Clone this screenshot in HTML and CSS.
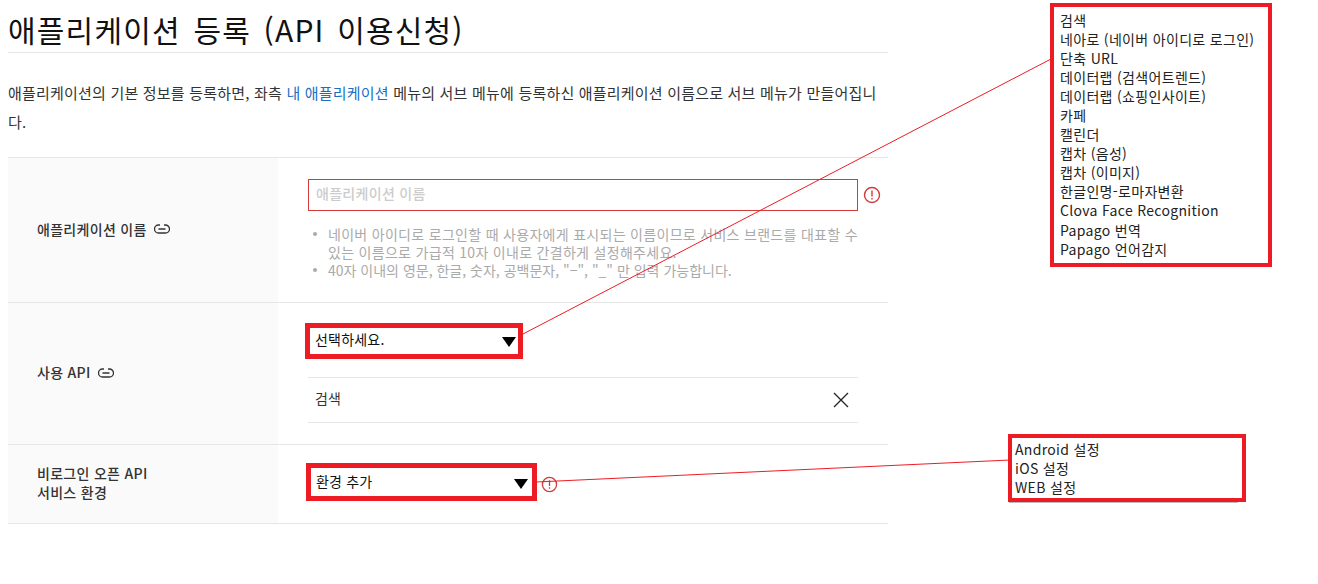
FILE: index.html
```html
<!DOCTYPE html>
<html lang="ko">
<head>
    <meta charset="UTF-8">
    <title>애플리케이션 등록 (API 이용신청)</title>
    <link rel="stylesheet" href="styles.css">
</head>
<body>
    <div class="content">
        <h1>애플리케이션 등록 (API 이용신청)</h1>
        <p class="intro">애플리케이션의 기본 정보를 등록하면, 좌측 <a href="#">내 애플리케이션</a> 메뉴의 서브 메뉴에 등록하신 애플리케이션 이름으로 서브 메뉴가 만들어집니다.</p>

        <div class="form-row row-name">
            <div class="form-label">
                <span>애플리케이션 이름</span>
                <svg class="link-icon" viewBox="0 0 16 10"><path d="M6 1H4.5a4 4 0 0 0 0 8H11.5a4 4 0 0 0 0-8H10M4.5 5h7" /></svg>
            </div>
            <div class="form-field">
                <div class="input-line">
                    <div class="text-input">애플리케이션 이름</div>
                    <svg class="alert-icon" viewBox="0 0 18 18"><circle cx="9" cy="9" r="7.5" /><path d="M9 4.5v6M9 12v1.5" /></svg>
                </div>
                <ul class="hints">
                    <li>네이버 아이디로 로그인할 때 사용자에게 표시되는 이름이므로 서비스 브랜드를 대표할 수 있는 이름으로 가급적 10자 이내로 간결하게 설정해주세요.</li>
                    <li class="hint-short">40자 이내의 영문, 한글, 숫자, 공백문자, "−", "_" 만 입력 가능합니다.</li>
                </ul>
            </div>
        </div>

        <div class="form-row row-api">
            <div class="form-label">
                <span>사용 API</span>
                <svg class="link-icon" viewBox="0 0 16 10"><path d="M6 1H4.5a4 4 0 0 0 0 8H11.5a4 4 0 0 0 0-8H10M4.5 5h7" /></svg>
            </div>
            <div class="form-field">
                <div class="select-box select-api">선택하세요.<i class="arrow"></i></div>
                <div class="api-item">
                    <span>검색</span>
                    <svg class="close-icon" viewBox="0 0 16 16"><path d="M1 1l14 14M15 1L1 15" /></svg>
                </div>
            </div>
        </div>

        <div class="form-row row-env">
            <div class="form-label">비로그인 오픈 API<br>서비스 환경</div>
            <div class="form-field">
                <div class="input-line">
                    <div class="select-box select-env">환경 추가<i class="arrow"></i></div>
                    <svg class="alert-icon small" viewBox="0 0 18 18"><circle cx="9" cy="9" r="7.5" /><path d="M9 4.5v6M9 12v1.5" /></svg>
                </div>
            </div>
        </div>
    </div>

    <!-- annotations drawn over the form -->
    <svg class="lines" viewBox="0 0 1318 584">
        <path d="M523 334L1051 59" />
        <path d="M536 482L1010 460" />
    </svg>

    <div class="callout callout-api">
        <div>검색</div>
        <div>네아로 (네이버 아이디로 로그인)</div>
        <div>단축 URL</div>
        <div>데이터랩 (검색어트렌드)</div>
        <div>데이터랩 (쇼핑인사이트)</div>
        <div>카페</div>
        <div>캘린더</div>
        <div>캡차 (음성)</div>
        <div>캡차 (이미지)</div>
        <div>한글인명-로마자변환</div>
        <div>Clova Face Recognition</div>
        <div>Papago 번역</div>
        <div>Papago 언어감지</div>
    </div>

    <div class="callout callout-env">
        <div>Android 설정</div>
        <div>iOS 설정</div>
        <div>WEB 설정</div>
    </div>
</body>
</html>
```

FILE: styles.css
```css
* {
    margin: 0;
    padding: 0;
    box-sizing: border-box;
}

body {
    font-family: "Noto Sans CJK KR", "Noto Sans", sans-serif;
    color: #333;
    background-color: #fff;
    font-size: 14px;
}

.content {
    width: 888px;
    padding-left: 8px;
}

h1 {
    font-size: 30px;
    font-weight: 400;
    line-height: 40px;
    color: #111;
    padding-top: 9px;
    height: 53px;
    border-bottom: 1px solid #e6e6e6;
    letter-spacing: 1.2px;
    word-spacing: 3px;
}

.intro {
    margin-top: 25px;
    line-height: 29px;
    font-size: 15px;
    letter-spacing: 0.2px;
    height: 79px;
    color: #333;
}

.intro a {
    color: #1a6fc4;
    text-decoration: none;
}

/* form rows */
.form-row {
    display: flex;
    border-top: 1px solid #e6e6e6;
}

.row-name { height: 145px; }
.row-api { height: 142px; }
.row-env { height: 80px; border-bottom: 1px solid #e6e6e6; }

.form-label {
    width: 270px;
    padding-left: 29px;
    padding-bottom: 2px;
    background-color: #fafafa;
    display: flex;
    align-items: center;
    gap: 7px;
    font-weight: 500;
    color: #333;
    font-size: 14px;
    letter-spacing: 0.3px;
    line-height: 19px;
}

.row-env .form-label {
    display: block;
    padding-top: 19px;
}

.link-icon {
    width: 16px;
    height: 10px;
    fill: none;
    stroke: #333;
    stroke-width: 1.3;
}

.form-field {
    padding: 21px 0 0 30px;
    width: 580px;
}

.row-env .form-field {
    padding-top: 18px;
}

.input-line {
    display: flex;
    align-items: center;
}

.text-input {
    width: 550px;
    height: 32px;
    border: 1px solid #d43b3b;
    padding-left: 7px;
    line-height: 26px;
    font-size: 14px;
    letter-spacing: 0.3px;
    font-weight: 500;
    color: #ccc;
    flex-shrink: 0;
}

.alert-icon {
    width: 18px;
    height: 18px;
    margin-left: 5px;
    fill: none;
    stroke: #d43b3b;
    stroke-width: 1.4;
    flex-shrink: 0;
}

.alert-icon.small {
    width: 17px;
    height: 17px;
    margin: 4px 0 0 4px;
}

.hints {
    list-style: none;
    margin-top: 14px;
    width: 550px;
    color: #aaa;
    font-size: 14px;
    letter-spacing: 0.3px;
    line-height: 18px;
}

.hints li {
    position: relative;
    padding-left: 20px;
}

.hints .hint-short {
    letter-spacing: 0;
}

.hints li::before {
    content: "";
    position: absolute;
    left: 5px;
    top: 7px;
    width: 4px;
    height: 4px;
    border-radius: 50%;
    background-color: #aaa;
}

.select-box {
    display: flex;
    align-items: center;
    justify-content: space-between;
    border: 5px solid #ed1c24;
    margin-left: -3px;
    padding: 0 2px 5px 5px;
    color: #111;
    font-size: 14px;
    letter-spacing: 0.2px;
    flex-shrink: 0;
}

.select-api {
    width: 218px;
    height: 36px;
    margin-top: -1px;
}

.select-env {
    width: 231px;
    height: 38px;
    margin-left: -2px;
    padding: 0 4px 3px 5px;
}

.arrow {
    width: 0;
    height: 0;
    margin-top: 6px;
    border-left: 7px solid transparent;
    border-right: 7px solid transparent;
    border-top: 10px solid #000;
}

.api-item {
    display: flex;
    align-items: center;
    justify-content: space-between;
    margin-top: 18px;
    width: 550px;
    height: 46px;
    border-top: 1px solid #e6e6e6;
    border-bottom: 1px solid #e6e6e6;
    padding: 0 9px 4px 7px;
    color: #333;
    letter-spacing: 0.2px;
}

.close-icon {
    width: 16px;
    height: 16px;
    margin-top: 4px;
    fill: none;
    stroke: #222;
    stroke-width: 1.3;
}

/* annotations */
.lines {
    position: absolute;
    top: 0;
    left: 0;
    width: 1318px;
    height: 584px;
    fill: none;
    stroke: #ed1c24;
    stroke-width: 1;
    pointer-events: none;
}

.callout {
    position: absolute;
    background-color: #fff;
    border: 4px solid #ed1c24;
    color: #222;
    font-size: 14px;
    letter-spacing: 0.32px;
    line-height: 19.05px;
}

.callout-api {
    left: 1050px;
    top: 3px;
    width: 222px;
    height: 264px;
    padding: 4px 0 0 6px;
}

.callout-env {
    left: 1008px;
    top: 434px;
    width: 238px;
    height: 68px;
    padding: 2px 0 0 3px;
}

/* grey edge of the dropdown peeking out under the box */
.callout-env::after {
    content: "";
    position: absolute;
    left: -3px;
    right: 4px;
    bottom: -5px;
    height: 1px;
    background-color: #bbb;
}
```
